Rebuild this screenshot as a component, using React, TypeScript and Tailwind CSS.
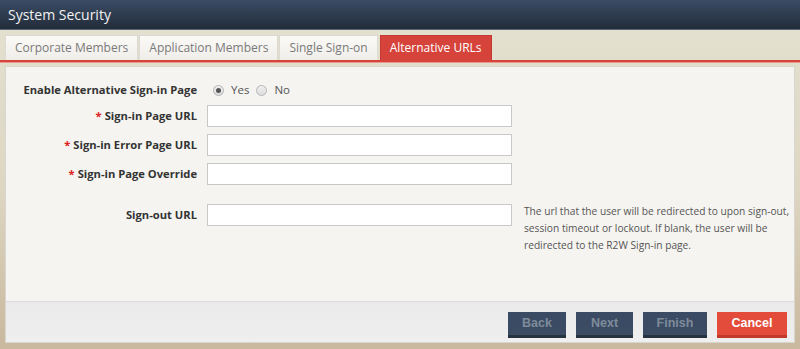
import React from 'react';

const font = { fontFamily: '"Open Sans", "Noto Sans", sans-serif' };

function Tab({ label, active }: { label: string; active?: boolean }) {
  return (
    <div
      className={`h-[25px] px-[9px] flex items-center text-[12px] border border-b-0 ${
        active
          ? 'bg-[#d6433a] border-[#c23a31] text-white'
          : 'bg-gradient-to-b from-[#fbfaf7] to-[#efeee9] border-[#dcdad2] text-[#7a7a7a]'
      }`}
    >
      {label}
    </div>
  );
}

function Field({ label, required }: { label: string; required?: boolean }) {
  return (
    <div className="flex items-center h-[22px]">
      <div className="w-[191px] text-right text-[11.2px] font-bold text-[#333]">
        {required && <span className="text-[#e02020] mr-[3px]">*</span>}
        {label}
      </div>
      <input
        type="text"
        className="ml-[10px] w-[305px] h-[22px] bg-white border border-[#c8c8c8] outline-none"
      />
    </div>
  );
}

function Radio({ checked }: { checked?: boolean }) {
  return (
    <span className="w-[11px] h-[11px] rounded-full border border-[#b5b5b5] bg-gradient-to-b from-[#f0f0f0] to-[#dcdcdc] flex items-center justify-center">
      {checked && <span className="w-[5px] h-[5px] rounded-full bg-[#555]" />}
    </span>
  );
}

function Button({ label, cancel }: { label: string; cancel?: boolean }) {
  return (
    <div
      className={`h-[26px] flex items-center justify-center text-[12.5px] font-bold border-b-[3px] ${
        cancel
          ? 'bg-[#e34c3a] border-[#c23a2c] text-white w-[70px]'
          : 'bg-[#3a4b63] border-[#26323f] text-[#7f8b9b]'
      }`}
      style={{ fontFamily: '"Liberation Sans", Arial, sans-serif' }}
    >
      {label}
    </div>
  );
}

export default function App() {
  return (
    <div className="w-[800px] h-[349px] flex flex-col bg-[#a89c9b]" style={font}>
      <div className="h-[30px] shrink-0 bg-gradient-to-b from-[#3c4c65] to-[#222d3b] flex items-center pl-[8px] text-[14px] text-[#f2f2f2] border-b border-[#5b6470]">
        System Security
      </div>
      <div className="flex-1 flex flex-col bg-gradient-to-b from-[#e3e0cf] via-[#ddd6c2] to-[#c9b89d] pb-[6px]">
        <div className="flex gap-[1px] pl-[5px] pt-[5px]">
          <Tab label="Corporate Members" />
          <Tab label="Application Members" />
          <Tab label="Single Sign-on" />
          <div className="ml-[1px]">
            <Tab label="Alternative URLs" active />
          </div>
        </div>
        <div className="h-[3px] bg-[#d6433a] border-b border-[#e89a90]" />
        <div className="flex-1 flex flex-col mx-[5px] mt-[3px] border border-[#d8d6d0] bg-[#f5f4f0]">
          <div className="flex-1 pt-[14px] flex flex-col">
            <div className="flex items-center h-[18px]">
              <div className="w-[191px] text-right text-[11.2px] font-bold text-[#333]">
                Enable Alternative Sign-in Page
              </div>
              <div className="ml-[16px] flex items-center gap-[7px] text-[11.5px] text-[#555]">
                <Radio checked />
                <span>Yes</span>
                <Radio />
                <span>No</span>
              </div>
            </div>
            <div className="mt-[6px] flex flex-col gap-[7px]">
              <Field label="Sign-in Page URL" required />
              <Field label="Sign-in Error Page URL" required />
              <Field label="Sign-in Page Override" required />
            </div>
            <div className="mt-[19px] flex items-start">
              <Field label="Sign-out URL" />
              <p className="ml-[12px] w-[272px] text-[10.2px] leading-[17px] text-[#555] -mt-[1px]">
                The url that the user will be redirected to upon sign-out, session timeout or
                lockout. If blank, the user will be redirected to the R2W Sign-in page.
              </p>
            </div>
          </div>
          <div className="h-[41px] border-t border-[#dcdcdc] bg-gradient-to-b from-[#eaeaea] to-[#efefef] flex items-start pt-[10px] justify-end gap-[10px] pr-[7px]">
            <div className="w-[58px]"><Button label="Back" /></div>
            <div className="w-[57px]"><Button label="Next" /></div>
            <div className="w-[64px]"><Button label="Finish" /></div>
            <Button label="Cancel" cancel />
          </div>
        </div>
      </div>
    </div>
  );
}
